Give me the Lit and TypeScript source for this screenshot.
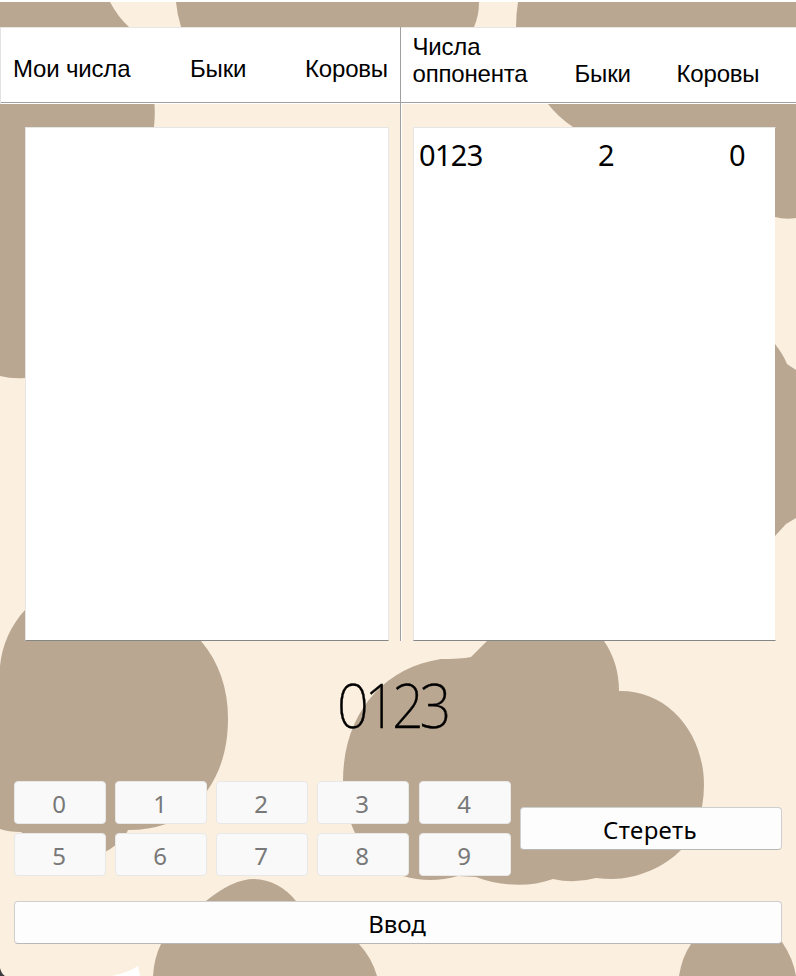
import { LitElement, html, css } from "lit";
import { customElement, property, state } from "lit/decorators.js";

interface Guess {
  value: string;
  bulls: number;
  cows: number;
}

@customElement("cow-pattern")
class CowPattern extends LitElement {
  static styles = css`
    :host { display: block; }
    svg { display: block; }
    .spot { fill: #b9a792; }
    .base { fill: #fbefdf; }
    .white { fill: #ffffff; }
    .corner { fill: #3b3b40; }
  `;
  render() {
    return html`<svg width="796" height="976" viewBox="0 0 796 976">
      <rect class="base" y="2" width="796" height="974" />
      <g class="spot">
        <path d="M0 2H110Q118 17 129 27L153 90Q156 108 154 127V300Q80 373 25 378Q12 379 0 376Z" />
        <path d="M176 2H479Q479 16 474 27L440 70H210L181 27Q177 14 176 2Z" />
        <path d="M518 2H796V218Q785 220 775 217L740 190L610 140Q594 139 573 127Q558 117 548 104L530 80L516 27Q516 14 518 2Z" />
        <path d="M770 338L775 344Q783 354 787 364L796 370V518L786 524L775 536L765 540Z" />
        <path d="M0 666C2 645 11 625 25 610L90 575L180 620L201 641C219 662 228 689 228 718C228 748 221 771 207 791C196 808 182 820 166 824Q149 830 128 830L126 834Q117 846 105 852L60 860L21 832Q8 832 0 829Z" />
        <path d="M471 657L487 641L545 610L604 641Q619 663 619 691C669 690 704 734 704 785Q704 795 702 807L682 849C665 867 637 879 612 879Q604 879 596 878Q574 884 553 879C529 888 499 886 476 877L458 876Q430 884 403 876L355 833Q346 815 343 781C343 715 382 668 441 659Q460 659 471 657Z" />
        <path d="M153 976Q154 958 161 944L206 901Q233 879 254 879Q279 880 296 901L359 944Q372 958 377 976Z" />
        <path d="M679 976Q682 957 691 944L740 920L782 942Q793 958 796 976Z" />
      </g>
      <path class="white" d="M112 976Q127 973 138 966L140 976Z" />
      <path class="corner" d="M0 968Q1 973 5 976H0Z" />
    </svg>`;
  }
}

@customElement("app-root")
class AppRoot extends LitElement {
  static styles = css`
    :host {
      display: block;
      position: relative;
      width: 796px;
      height: 976px;
      overflow: hidden;
      background: #fff;
      color: #000;
      font-family: "Noto Sans", "Open Sans", sans-serif;
    }
    * { box-sizing: border-box; }
    .backdrop { position: absolute; inset: 0; }
    .page { position: relative; height: 976px; padding-top: 27px; }
    .boards { display: grid; grid-template-columns: 400px 396px; height: 614px; }
    .board { display: flex; flex-direction: column; }
    .board.theirs { border-left: 1px solid #a0a0a0; box-shadow: inset 1px 0 #fff; }
    .head {
      display: grid;
      height: 77px;
      background: linear-gradient(#a0a0a0, #a0a0a0) 0 74px / 100% 1px no-repeat #fff;
      border-top: 1px solid #e8e6e4;
      font: 24px/27px "Liberation Sans", Arial, sans-serif;
      letter-spacing: -0.18px;
      white-space: nowrap;
    }
    .mine .head {
      border-left: 1px solid #e3e3e3;
      grid-template-columns: 177px 115px 1fr;
      padding: 27px 0 0 12px;
    }
    .theirs .head {
      grid-template-columns: 162px 102px 1fr;
      align-items: end;
      padding: 0 0 17px 11.5px;
    }
    .list { height: 514px; margin-top: 23px; background: #fff; border: 1px solid #e6e6e6; border-bottom-color: #868686; }
    .mine .list { margin-left: 25px; width: 364px; }
    .theirs .list { margin-left: 12px; width: 363px; border-right-color: transparent; background-clip: padding-box; }
    .row { display: grid; grid-template-columns: 179px 131px 1fr; padding: 7px 0 0 5px; font-size: 29px; line-height: 40px; letter-spacing: -0.7px; }
    .entry {
      height: 140px;
      padding-top: 23px;
      margin-left: 337px;
      font-size: 60px;
      font-weight: 200;
      -webkit-text-stroke: 0.4px #000;
      line-height: 82px;
      letter-spacing: -4.6px;
      transform: scaleX(0.93);
      transform-origin: left;
    }
    .controls { display: flex; align-items: center; gap: 9px; padding-left: 14px; }
    .keys { display: grid; grid-template-columns: repeat(4, 92px) 93px; gap: 9px; }
    .keys button:nth-child(5n) { margin-left: 1px; }
    button {
      height: 43px;
      padding: 2px 2px 0 0;
      font: 24px/36px "Noto Sans", "Open Sans", sans-serif;
      color: #000;
      background: #fdfdfd;
      border: 1px solid #cfcfcf;
      border-bottom-color: #b8b8b8;
      border-radius: 4px;
    }
    button:disabled { color: #787878; background: #f9f9f9; border-color: #e8e8e8; }
    .erase { width: 262px; letter-spacing: 0.35px; }
    .submit { display: block; width: 768px; margin: 25px 0 0 14px; }
  `;

  @state() private entry = "0123";
  @property({ attribute: false }) guesses: Guess[] = [{ value: "0123", bulls: 2, cows: 0 }];

  render() {
    return html`
      <cow-pattern class="backdrop"></cow-pattern>
      <div class="page">
        <div class="boards">
          <section class="board mine">
            <div class="head"><span>Мои числа</span><span>Быки</span><span>Коровы</span></div>
            <div class="list"></div>
          </section>
          <section class="board theirs">
            <div class="head"><span>Числа<br />оппонента</span><span>Быки</span><span>Коровы</span></div>
            <div class="list">
              ${this.guesses.map((g) => html`<div class="row"><span>${g.value}</span><span>${g.bulls}</span><span>${g.cows}</span></div>`)}
            </div>
          </section>
        </div>
        <div class="entry">${this.entry}</div>
        <div class="controls">
          <div class="keys">${[0, 1, 2, 3, 4, 5, 6, 7, 8, 9].map((n) => html`<button disabled>${n}</button>`)}</div>
          <button class="erase">Стереть</button>
        </div>
        <button class="submit">Ввод</button>
      </div>
    `;
  }
}
